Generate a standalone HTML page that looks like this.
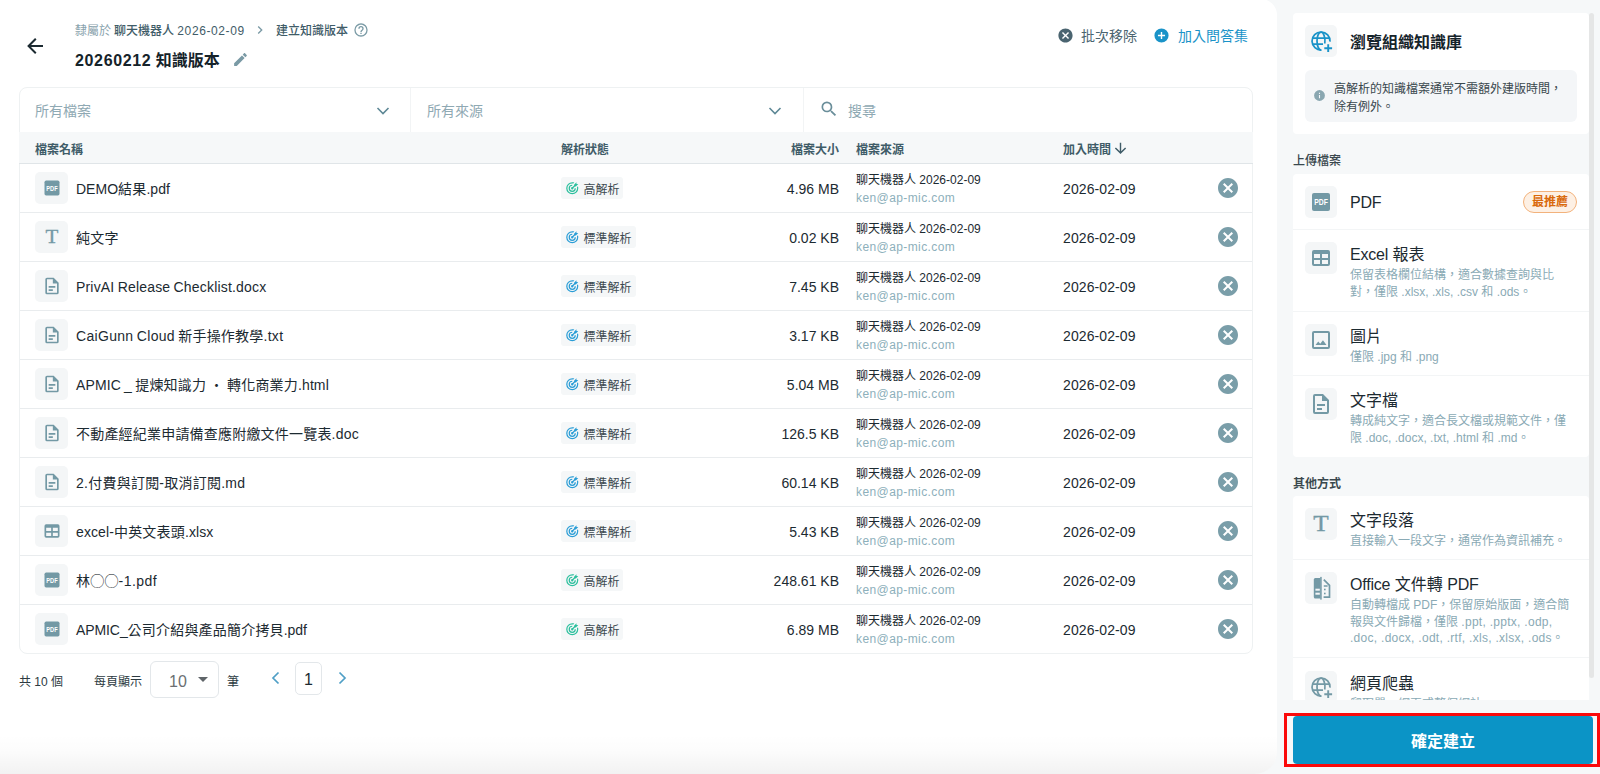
<!DOCTYPE html>
<html lang="zh-Hant"><head><meta charset="utf-8"><title>建立知識版本</title>
<style>
*{box-sizing:border-box;margin:0;padding:0}
html,body{width:1600px;height:774px;overflow:hidden}
body{background:#f6f8f9;font-family:"Liberation Sans","Noto Sans CJK TC",sans-serif;color:#1c2a31;font-size:14px;position:relative}
.l{font-size:1em}
.t,.h,.fn,.sz,.src,.dt,.tt,.ds,.lab{margin-top:1px}
.bc .l{letter-spacing:.6px}
.ttl .l{letter-spacing:.65px}
.fn{letter-spacing:.2px;word-spacing:-.8px}
.em .l{letter-spacing:.4px}
.tt .l{letter-spacing:-.2px}
.of .l{letter-spacing:.28px}
.dt .l{letter-spacing:.1px}
.ic{display:block}
.abs{position:absolute}
#main{position:absolute;left:0;top:-1px;width:1277px;height:775px;background:#fff;border-top-right-radius:16px;border-bottom-right-radius:22px;overflow:hidden}
#main:after{content:'';position:absolute;left:0;bottom:0;width:100%;height:40px;background:linear-gradient(to bottom,rgba(0,0,0,0),rgba(0,0,0,.012) 40%,rgba(0,0,0,.05))}
.t{position:absolute;white-space:nowrap;line-height:20px}
#card{position:absolute;left:19px;top:87px;width:1234px;height:567px;border:1px solid #eef1f2;border-radius:8px;overflow:hidden;background:#fff}
#hdr{position:absolute;left:19px;top:132px;width:1234px;height:32px;background:#f6f8f9;border-bottom:1px solid #e0e5e8}
.h{position:absolute;top:7px;font-size:12px;font-weight:700;color:#3f5c68;line-height:20px;white-space:nowrap}
.row{position:absolute;left:20px;width:1232px;height:49px;border-bottom:1px solid #e9ecee}
.fi{position:absolute;left:15px;top:8px;width:33px;height:32px;border-radius:5px;background:#f4f6f7;display:flex;align-items:center;justify-content:center}
.fn{position:absolute;left:56px;top:14px;line-height:20px;white-space:nowrap;font-size:14px}
.bdg{position:absolute;left:541px;top:13px;height:22px;border-radius:3px;background:#f5f7f8;display:flex;align-items:center;padding-left:3.8px;font-size:12px;color:#3d4a50;white-space:nowrap}
.bdg span{margin-left:4.3px;line-height:22px;position:relative;top:2px}
.sz{position:absolute;right:413px;top:14px;line-height:20px;white-space:nowrap}
.src{position:absolute;left:836px;top:6px;font-size:12px;line-height:18px;white-space:nowrap}
.src .em{color:#8db0bb}
.dt{position:absolute;left:1043px;top:14px;line-height:20px;white-space:nowrap}
.rm{position:absolute;left:1196px;top:12px}
.rc{position:absolute;left:1293px;width:296px;background:#fff;border-radius:4px;overflow:hidden}
.it{position:absolute;left:0;width:296px;border-bottom:1px solid #f3f5f6}
.ib{position:absolute;left:12px;top:12px;width:32px;height:32px;border-radius:5px;background:#f4f6f7;display:flex;align-items:center;justify-content:center}
.tt{position:absolute;left:57px;top:12px;font-size:16px;line-height:24px;white-space:nowrap;color:#1c2a31}
.ds{position:absolute;left:57px;top:36px;width:227px;font-size:12px;line-height:16.6px;color:#8aaab5}
.lab{position:absolute;left:1293px;font-size:12px;line-height:18px;font-weight:500;color:#3a484e;white-space:nowrap}
.rec{position:absolute;left:230px;top:17px;width:54px;height:22px;border:1px solid #f2b27c;background:#fdf0e4;border-radius:11px;color:#d9690b;font-size:12px;font-weight:700;line-height:20px;text-align:center}
</style></head>
<body>
<div id="main"></div>
<div class="abs" style="left:23px;top:34px"><svg class="ic" width="24" height="24" viewBox="0 0 24 24" style=""><path fill="#1c2a31" d="M20,11V13H8L13.5,18.5L12.08,19.92L4.16,12L12.08,4.08L13.5,5.5L8,11H20Z"/></svg></div>
<div class="t" style="left:75px;top:20px;font-size:12px;color:#8aa3ad">隸屬於</div>
<div class="t bc" style="left:114px;top:20px;font-size:12px;font-weight:500;color:#3f5c68">聊天機器人 <span class="l">2026-02-09</span></div>
<div class="abs" style="left:252px;top:22px"><svg class="ic" width="16" height="16" viewBox="0 0 24 24" style=""><path fill="#7a9aa5" d="M8.59,16.58L13.17,12L8.59,7.41L10,6L16,12L10,18L8.59,16.58Z"/></svg></div>
<div class="t" style="left:276px;top:20px;font-size:12px;font-weight:500;color:#3f5c68">建立知識版本</div>
<div class="abs" style="left:353px;top:21.6px"><svg class="ic" width="16" height="16" viewBox="0 0 24 24" style=""><path fill="#7a9aa5" d="M11,18H13V16H11V18M12,2A10,10 0 0,0 2,12A10,10 0 0,0 12,22A10,10 0 0,0 22,12A10,10 0 0,0 12,2M12,20C7.59,20 4,16.41 4,12C4,7.59 7.59,4 12,4C16.41,4 20,7.59 20,12C20,16.41 16.41,20 12,20M12,6A4,4 0 0,0 8,10H10A2,2 0 0,1 12,8A2,2 0 0,1 14,10C14,12 11,11.75 11,15H13C13,12.75 16,12.5 16,10A4,4 0 0,0 12,6Z"/></svg></div>
<div class="t ttl" style="left:75px;top:48px;font-size:16px;line-height:24px;font-weight:700;color:#15232a"><span class="l">20260212</span> 知識版本</div>
<div class="abs" style="left:231.5px;top:50.5px"><svg class="ic" width="17" height="17" viewBox="0 0 24 24" style=""><path fill="#7a9aa5" d="M20.71,7.04C21.1,6.65 21.1,6 20.71,5.63L18.37,3.29C18,2.9 17.35,2.9 16.96,3.29L15.12,5.12L18.87,8.87M3,17.25V21H6.75L17.81,9.93L14.06,6.18L3,17.25Z"/></svg></div>
<div class="abs" style="left:1057px;top:27px"><svg class="ic" width="17" height="17" viewBox="0 0 24 24" style=""><path fill="#4a6470" d="M12,2C17.53,2 22,6.47 22,12C22,17.53 17.53,22 12,22C6.47,22 2,17.53 2,12C2,6.47 6.47,2 12,2M15.59,7L12,10.59L8.41,7L7,8.41L10.59,12L7,15.59L8.41,17L12,13.41L15.59,17L17,15.59L13.41,12L17,8.41L15.59,7Z"/></svg></div>
<div class="t" style="left:1081px;top:25px;color:#4a6470">批次移除</div>
<div class="abs" style="left:1153px;top:27px"><svg class="ic" width="17" height="17" viewBox="0 0 24 24" style=""><path fill="#1a93c8" d="M17,13H13V17H11V13H7V11H11V7H13V11H17M12,2A10,10 0 0,0 2,12A10,10 0 0,0 12,22A10,10 0 0,0 22,12A10,10 0 0,0 12,2Z"/></svg></div>
<div class="t" style="left:1178px;top:25px;color:#1a93c8">加入問答集</div>
<div id="card"></div>
<div class="abs" style="left:410px;top:88px;width:1px;height:44px;background:#f2f4f5"></div>
<div class="abs" style="left:802.5px;top:88px;width:1px;height:44px;background:#f2f4f5"></div>
<div class="t" style="left:35px;top:100px;color:#8fa9b3">所有檔案</div>
<div class="abs" style="left:376px;top:106px"><svg class="ic" width="14" height="10" viewBox="0 0 14 10"><path d="M1.5,2L7,7.5L12.5,2" fill="none" stroke="#5e8896" stroke-width="1.6"/></svg></div>
<div class="t" style="left:427px;top:100px;color:#8fa9b3">所有來源</div>
<div class="abs" style="left:768px;top:106px"><svg class="ic" width="14" height="10" viewBox="0 0 14 10"><path d="M1.5,2L7,7.5L12.5,2" fill="none" stroke="#5e8896" stroke-width="1.6"/></svg></div>
<div class="abs" style="left:819px;top:99px"><svg class="ic" width="20" height="20" viewBox="0 0 24 24" style=""><path fill="#6a8e9a" d="M9.5,3A6.5,6.5 0 0,1 16,9.5C16,11.11 15.41,12.59 14.44,13.73L14.71,14H15.5L20.5,19L19,20.5L14,15.5V14.71L13.73,14.44C12.59,15.41 11.11,16 9.5,16A6.5,6.5 0 0,1 3,9.5A6.5,6.5 0 0,1 9.5,3M9.5,5C7,5 5,7 5,9.5C5,12 7,14 9.5,14C12,14 14,12 14,9.5C14,7 12,5 9.5,5Z"/></svg></div>
<div class="t" style="left:848px;top:100px;color:#8fa9b3">搜尋</div>
<div id="hdr"><div class="h" style="left:16px">檔案名稱</div><div class="h" style="left:542px">解析狀態</div><div class="h" style="right:414px">檔案大小</div><div class="h" style="left:837px">檔案來源</div><div class="h" style="left:1044px">加入時間</div><div class="abs" style="left:1093px;top:7.5px"><svg class="ic" width="17" height="17" viewBox="0 0 24 24" style=""><path fill="#3f5c68" d="M11,4H13V16L18.5,10.5L19.92,11.92L12,19.84L4.08,11.92L5.5,10.5L11,16V4Z"/></svg></div></div>
<div class="row" style="top:164px">
<div class="fi"><svg class="ic" width="20" height="20" viewBox="0 0 24 24"><rect x="3" y="3" width="18" height="18" rx="2" fill="#7399a5"/><text x="12" y="15.4" text-anchor="middle" font-family="Liberation Sans, sans-serif" font-weight="700" font-size="9.4" textLength="13.6" lengthAdjust="spacingAndGlyphs" fill="#fff">PDF</text></svg></div><div class="fn"><span class="l" style="letter-spacing:0.01px">DEMO</span>結果<span class="l" style="letter-spacing:0.01px">.pdf</span></div><div class="bdg" style="width:62px"><svg class="ic" width="14.5" height="14.5" viewBox="0 0 24 24" style=""><path fill="#2bbf9d" d="M12,2A10,10 0 0,0 2,12A10,10 0 0,0 12,22A10,10 0 0,0 22,12C22,10.84 21.79,9.69 21.39,8.61L19.79,10.21C19.93,10.8 20,11.4 20,12A8,8 0 0,1 12,20A8,8 0 0,1 4,12A8,8 0 0,1 12,4C12.6,4 13.2,4.07 13.79,4.21L15.4,2.6C14.31,2.21 13.16,2 12,2M19,2L15,6V7.5L12.45,10.05C12.3,10 12.15,10 12,10A2,2 0 0,0 10,12A2,2 0 0,0 12,14A2,2 0 0,0 14,12C14,11.85 14,11.7 13.95,11.55L16.5,9H18L22,5H19V2M12,6A6,6 0 0,0 6,12A6,6 0 0,0 12,18A6,6 0 0,0 18,12H16A4,4 0 0,1 12,16A4,4 0 0,1 8,12A4,4 0 0,1 12,8V6Z"/></svg><span>高解析</span></div>
<div class="sz"><span class="l">4.96 MB</span></div>
<div class="src"><div>聊天機器人 <span class="l">2026-02-09</span></div><div class="em"><span class="l">ken@ap-mic.com</span></div></div>
<div class="dt"><span class="l">2026-02-09</span></div><div class="rm"><svg class="ic" width="24" height="24" viewBox="0 0 24 24" style=""><path fill="#7a9ea9" d="M12,2C17.53,2 22,6.47 22,12C22,17.53 17.53,22 12,22C6.47,22 2,17.53 2,12C2,6.47 6.47,2 12,2M15.59,7L12,10.59L8.41,7L7,8.41L10.59,12L7,15.59L8.41,17L12,13.41L15.59,17L17,15.59L13.41,12L17,8.41L15.59,7Z"/></svg></div></div>
<div class="row" style="top:213px">
<div class="fi"><svg class="ic" width="20" height="20" viewBox="0 0 24 24"><text x="12" y="19.3" text-anchor="middle" font-family="Liberation Serif, serif" font-size="23.3" textLength="15.4" lengthAdjust="spacingAndGlyphs" stroke="#7399a5" stroke-width=".35" fill="#7399a5">T</text></svg></div><div class="fn">純文字</div><div class="bdg" style="width:75px"><svg class="ic" width="14.5" height="14.5" viewBox="0 0 24 24" style=""><path fill="#2a9dd6" d="M12,2A10,10 0 0,0 2,12A10,10 0 0,0 12,22A10,10 0 0,0 22,12C22,10.84 21.79,9.69 21.39,8.61L19.79,10.21C19.93,10.8 20,11.4 20,12A8,8 0 0,1 12,20A8,8 0 0,1 4,12A8,8 0 0,1 12,4C12.6,4 13.2,4.07 13.79,4.21L15.4,2.6C14.31,2.21 13.16,2 12,2M19,2L15,6V7.5L12.45,10.05C12.3,10 12.15,10 12,10A2,2 0 0,0 10,12A2,2 0 0,0 12,14A2,2 0 0,0 14,12C14,11.85 14,11.7 13.95,11.55L16.5,9H18L22,5H19V2M12,6A6,6 0 0,0 6,12A6,6 0 0,0 12,18A6,6 0 0,0 18,12H16A4,4 0 0,1 12,16A4,4 0 0,1 8,12A4,4 0 0,1 12,8V6Z"/></svg><span>標準解析</span></div>
<div class="sz"><span class="l">0.02 KB</span></div>
<div class="src"><div>聊天機器人 <span class="l">2026-02-09</span></div><div class="em"><span class="l">ken@ap-mic.com</span></div></div>
<div class="dt"><span class="l">2026-02-09</span></div><div class="rm"><svg class="ic" width="24" height="24" viewBox="0 0 24 24" style=""><path fill="#7a9ea9" d="M12,2C17.53,2 22,6.47 22,12C22,17.53 17.53,22 12,22C6.47,22 2,17.53 2,12C2,6.47 6.47,2 12,2M15.59,7L12,10.59L8.41,7L7,8.41L10.59,12L7,15.59L8.41,17L12,13.41L15.59,17L17,15.59L13.41,12L17,8.41L15.59,7Z"/></svg></div></div>
<div class="row" style="top:262px">
<div class="fi"><svg class="ic" width="20" height="20" viewBox="0 0 24 24" style=""><path fill="#7399a5" d="M6,2A2,2 0 0,0 4,4V20A2,2 0 0,0 6,22H18A2,2 0 0,0 20,20V8L14,2H6M6,4H13V9H18V20H6V4M8,12V14H16V12H8M8,16V18H13V16H8Z"/></svg></div><div class="fn"><span class="l" style="letter-spacing:0.18px">PrivAI Release Checklist.docx</span></div><div class="bdg" style="width:75px"><svg class="ic" width="14.5" height="14.5" viewBox="0 0 24 24" style=""><path fill="#2a9dd6" d="M12,2A10,10 0 0,0 2,12A10,10 0 0,0 12,22A10,10 0 0,0 22,12C22,10.84 21.79,9.69 21.39,8.61L19.79,10.21C19.93,10.8 20,11.4 20,12A8,8 0 0,1 12,20A8,8 0 0,1 4,12A8,8 0 0,1 12,4C12.6,4 13.2,4.07 13.79,4.21L15.4,2.6C14.31,2.21 13.16,2 12,2M19,2L15,6V7.5L12.45,10.05C12.3,10 12.15,10 12,10A2,2 0 0,0 10,12A2,2 0 0,0 12,14A2,2 0 0,0 14,12C14,11.85 14,11.7 13.95,11.55L16.5,9H18L22,5H19V2M12,6A6,6 0 0,0 6,12A6,6 0 0,0 12,18A6,6 0 0,0 18,12H16A4,4 0 0,1 12,16A4,4 0 0,1 8,12A4,4 0 0,1 12,8V6Z"/></svg><span>標準解析</span></div>
<div class="sz"><span class="l">7.45 KB</span></div>
<div class="src"><div>聊天機器人 <span class="l">2026-02-09</span></div><div class="em"><span class="l">ken@ap-mic.com</span></div></div>
<div class="dt"><span class="l">2026-02-09</span></div><div class="rm"><svg class="ic" width="24" height="24" viewBox="0 0 24 24" style=""><path fill="#7a9ea9" d="M12,2C17.53,2 22,6.47 22,12C22,17.53 17.53,22 12,22C6.47,22 2,17.53 2,12C2,6.47 6.47,2 12,2M15.59,7L12,10.59L8.41,7L7,8.41L10.59,12L7,15.59L8.41,17L12,13.41L15.59,17L17,15.59L13.41,12L17,8.41L15.59,7Z"/></svg></div></div>
<div class="row" style="top:311px">
<div class="fi"><svg class="ic" width="20" height="20" viewBox="0 0 24 24" style=""><path fill="#7399a5" d="M6,2A2,2 0 0,0 4,4V20A2,2 0 0,0 6,22H18A2,2 0 0,0 20,20V8L14,2H6M6,4H13V9H18V20H6V4M8,12V14H16V12H8M8,16V18H13V16H8Z"/></svg></div><div class="fn"><span class="l" style="letter-spacing:0.31px">CaiGunn Cloud</span> 新手操作教學<span class="l" style="letter-spacing:0.31px">.txt</span></div><div class="bdg" style="width:75px"><svg class="ic" width="14.5" height="14.5" viewBox="0 0 24 24" style=""><path fill="#2a9dd6" d="M12,2A10,10 0 0,0 2,12A10,10 0 0,0 12,22A10,10 0 0,0 22,12C22,10.84 21.79,9.69 21.39,8.61L19.79,10.21C19.93,10.8 20,11.4 20,12A8,8 0 0,1 12,20A8,8 0 0,1 4,12A8,8 0 0,1 12,4C12.6,4 13.2,4.07 13.79,4.21L15.4,2.6C14.31,2.21 13.16,2 12,2M19,2L15,6V7.5L12.45,10.05C12.3,10 12.15,10 12,10A2,2 0 0,0 10,12A2,2 0 0,0 12,14A2,2 0 0,0 14,12C14,11.85 14,11.7 13.95,11.55L16.5,9H18L22,5H19V2M12,6A6,6 0 0,0 6,12A6,6 0 0,0 12,18A6,6 0 0,0 18,12H16A4,4 0 0,1 12,16A4,4 0 0,1 8,12A4,4 0 0,1 12,8V6Z"/></svg><span>標準解析</span></div>
<div class="sz"><span class="l">3.17 KB</span></div>
<div class="src"><div>聊天機器人 <span class="l">2026-02-09</span></div><div class="em"><span class="l">ken@ap-mic.com</span></div></div>
<div class="dt"><span class="l">2026-02-09</span></div><div class="rm"><svg class="ic" width="24" height="24" viewBox="0 0 24 24" style=""><path fill="#7a9ea9" d="M12,2C17.53,2 22,6.47 22,12C22,17.53 17.53,22 12,22C6.47,22 2,17.53 2,12C2,6.47 6.47,2 12,2M15.59,7L12,10.59L8.41,7L7,8.41L10.59,12L7,15.59L8.41,17L12,13.41L15.59,17L17,15.59L13.41,12L17,8.41L15.59,7Z"/></svg></div></div>
<div class="row" style="top:360px">
<div class="fi"><svg class="ic" width="20" height="20" viewBox="0 0 24 24" style=""><path fill="#7399a5" d="M6,2A2,2 0 0,0 4,4V20A2,2 0 0,0 6,22H18A2,2 0 0,0 20,20V8L14,2H6M6,4H13V9H18V20H6V4M8,12V14H16V12H8M8,16V18H13V16H8Z"/></svg></div><div class="fn"><span class="l" style="letter-spacing:0.10px">APMIC _</span> 提煉知識力 ・ 轉化商業力<span class="l" style="letter-spacing:0.10px">.html</span></div><div class="bdg" style="width:75px"><svg class="ic" width="14.5" height="14.5" viewBox="0 0 24 24" style=""><path fill="#2a9dd6" d="M12,2A10,10 0 0,0 2,12A10,10 0 0,0 12,22A10,10 0 0,0 22,12C22,10.84 21.79,9.69 21.39,8.61L19.79,10.21C19.93,10.8 20,11.4 20,12A8,8 0 0,1 12,20A8,8 0 0,1 4,12A8,8 0 0,1 12,4C12.6,4 13.2,4.07 13.79,4.21L15.4,2.6C14.31,2.21 13.16,2 12,2M19,2L15,6V7.5L12.45,10.05C12.3,10 12.15,10 12,10A2,2 0 0,0 10,12A2,2 0 0,0 12,14A2,2 0 0,0 14,12C14,11.85 14,11.7 13.95,11.55L16.5,9H18L22,5H19V2M12,6A6,6 0 0,0 6,12A6,6 0 0,0 12,18A6,6 0 0,0 18,12H16A4,4 0 0,1 12,16A4,4 0 0,1 8,12A4,4 0 0,1 12,8V6Z"/></svg><span>標準解析</span></div>
<div class="sz"><span class="l">5.04 MB</span></div>
<div class="src"><div>聊天機器人 <span class="l">2026-02-09</span></div><div class="em"><span class="l">ken@ap-mic.com</span></div></div>
<div class="dt"><span class="l">2026-02-09</span></div><div class="rm"><svg class="ic" width="24" height="24" viewBox="0 0 24 24" style=""><path fill="#7a9ea9" d="M12,2C17.53,2 22,6.47 22,12C22,17.53 17.53,22 12,22C6.47,22 2,17.53 2,12C2,6.47 6.47,2 12,2M15.59,7L12,10.59L8.41,7L7,8.41L10.59,12L7,15.59L8.41,17L12,13.41L15.59,17L17,15.59L13.41,12L17,8.41L15.59,7Z"/></svg></div></div>
<div class="row" style="top:409px">
<div class="fi"><svg class="ic" width="20" height="20" viewBox="0 0 24 24" style=""><path fill="#7399a5" d="M6,2A2,2 0 0,0 4,4V20A2,2 0 0,0 6,22H18A2,2 0 0,0 20,20V8L14,2H6M6,4H13V9H18V20H6V4M8,12V14H16V12H8M8,16V18H13V16H8Z"/></svg></div><div class="fn">不動產經紀業申請備查應附繳文件一覽表<span class="l" style="letter-spacing:0.23px">.doc</span></div><div class="bdg" style="width:75px"><svg class="ic" width="14.5" height="14.5" viewBox="0 0 24 24" style=""><path fill="#2a9dd6" d="M12,2A10,10 0 0,0 2,12A10,10 0 0,0 12,22A10,10 0 0,0 22,12C22,10.84 21.79,9.69 21.39,8.61L19.79,10.21C19.93,10.8 20,11.4 20,12A8,8 0 0,1 12,20A8,8 0 0,1 4,12A8,8 0 0,1 12,4C12.6,4 13.2,4.07 13.79,4.21L15.4,2.6C14.31,2.21 13.16,2 12,2M19,2L15,6V7.5L12.45,10.05C12.3,10 12.15,10 12,10A2,2 0 0,0 10,12A2,2 0 0,0 12,14A2,2 0 0,0 14,12C14,11.85 14,11.7 13.95,11.55L16.5,9H18L22,5H19V2M12,6A6,6 0 0,0 6,12A6,6 0 0,0 12,18A6,6 0 0,0 18,12H16A4,4 0 0,1 12,16A4,4 0 0,1 8,12A4,4 0 0,1 12,8V6Z"/></svg><span>標準解析</span></div>
<div class="sz"><span class="l">126.5 KB</span></div>
<div class="src"><div>聊天機器人 <span class="l">2026-02-09</span></div><div class="em"><span class="l">ken@ap-mic.com</span></div></div>
<div class="dt"><span class="l">2026-02-09</span></div><div class="rm"><svg class="ic" width="24" height="24" viewBox="0 0 24 24" style=""><path fill="#7a9ea9" d="M12,2C17.53,2 22,6.47 22,12C22,17.53 17.53,22 12,22C6.47,22 2,17.53 2,12C2,6.47 6.47,2 12,2M15.59,7L12,10.59L8.41,7L7,8.41L10.59,12L7,15.59L8.41,17L12,13.41L15.59,17L17,15.59L13.41,12L17,8.41L15.59,7Z"/></svg></div></div>
<div class="row" style="top:458px">
<div class="fi"><svg class="ic" width="20" height="20" viewBox="0 0 24 24" style=""><path fill="#7399a5" d="M6,2A2,2 0 0,0 4,4V20A2,2 0 0,0 6,22H18A2,2 0 0,0 20,20V8L14,2H6M6,4H13V9H18V20H6V4M8,12V14H16V12H8M8,16V18H13V16H8Z"/></svg></div><div class="fn"><span class="l" style="letter-spacing:0.32px">2.</span>付費與訂閱<span class="l" style="letter-spacing:0.32px">-</span>取消訂閱<span class="l" style="letter-spacing:0.32px">.md</span></div><div class="bdg" style="width:75px"><svg class="ic" width="14.5" height="14.5" viewBox="0 0 24 24" style=""><path fill="#2a9dd6" d="M12,2A10,10 0 0,0 2,12A10,10 0 0,0 12,22A10,10 0 0,0 22,12C22,10.84 21.79,9.69 21.39,8.61L19.79,10.21C19.93,10.8 20,11.4 20,12A8,8 0 0,1 12,20A8,8 0 0,1 4,12A8,8 0 0,1 12,4C12.6,4 13.2,4.07 13.79,4.21L15.4,2.6C14.31,2.21 13.16,2 12,2M19,2L15,6V7.5L12.45,10.05C12.3,10 12.15,10 12,10A2,2 0 0,0 10,12A2,2 0 0,0 12,14A2,2 0 0,0 14,12C14,11.85 14,11.7 13.95,11.55L16.5,9H18L22,5H19V2M12,6A6,6 0 0,0 6,12A6,6 0 0,0 12,18A6,6 0 0,0 18,12H16A4,4 0 0,1 12,16A4,4 0 0,1 8,12A4,4 0 0,1 12,8V6Z"/></svg><span>標準解析</span></div>
<div class="sz"><span class="l">60.14 KB</span></div>
<div class="src"><div>聊天機器人 <span class="l">2026-02-09</span></div><div class="em"><span class="l">ken@ap-mic.com</span></div></div>
<div class="dt"><span class="l">2026-02-09</span></div><div class="rm"><svg class="ic" width="24" height="24" viewBox="0 0 24 24" style=""><path fill="#7a9ea9" d="M12,2C17.53,2 22,6.47 22,12C22,17.53 17.53,22 12,22C6.47,22 2,17.53 2,12C2,6.47 6.47,2 12,2M15.59,7L12,10.59L8.41,7L7,8.41L10.59,12L7,15.59L8.41,17L12,13.41L15.59,17L17,15.59L13.41,12L17,8.41L15.59,7Z"/></svg></div></div>
<div class="row" style="top:507px">
<div class="fi"><svg class="ic" width="20" height="20" viewBox="0 0 24 24" style=""><path fill="#7399a5" d="M5,4H19A2,2 0 0,1 21,6V18A2,2 0 0,1 19,20H5A2,2 0 0,1 3,18V6A2,2 0 0,1 5,4M5,8V12H11V8H5M13,8V12H19V8H13M5,14V18H11V14H5M13,14V18H19V14H13Z"/></svg></div><div class="fn"><span class="l" style="letter-spacing:0.10px">excel-</span>中英文表頭<span class="l" style="letter-spacing:0.10px">.xlsx</span></div><div class="bdg" style="width:75px"><svg class="ic" width="14.5" height="14.5" viewBox="0 0 24 24" style=""><path fill="#2a9dd6" d="M12,2A10,10 0 0,0 2,12A10,10 0 0,0 12,22A10,10 0 0,0 22,12C22,10.84 21.79,9.69 21.39,8.61L19.79,10.21C19.93,10.8 20,11.4 20,12A8,8 0 0,1 12,20A8,8 0 0,1 4,12A8,8 0 0,1 12,4C12.6,4 13.2,4.07 13.79,4.21L15.4,2.6C14.31,2.21 13.16,2 12,2M19,2L15,6V7.5L12.45,10.05C12.3,10 12.15,10 12,10A2,2 0 0,0 10,12A2,2 0 0,0 12,14A2,2 0 0,0 14,12C14,11.85 14,11.7 13.95,11.55L16.5,9H18L22,5H19V2M12,6A6,6 0 0,0 6,12A6,6 0 0,0 12,18A6,6 0 0,0 18,12H16A4,4 0 0,1 12,16A4,4 0 0,1 8,12A4,4 0 0,1 12,8V6Z"/></svg><span>標準解析</span></div>
<div class="sz"><span class="l">5.43 KB</span></div>
<div class="src"><div>聊天機器人 <span class="l">2026-02-09</span></div><div class="em"><span class="l">ken@ap-mic.com</span></div></div>
<div class="dt"><span class="l">2026-02-09</span></div><div class="rm"><svg class="ic" width="24" height="24" viewBox="0 0 24 24" style=""><path fill="#7a9ea9" d="M12,2C17.53,2 22,6.47 22,12C22,17.53 17.53,22 12,22C6.47,22 2,17.53 2,12C2,6.47 6.47,2 12,2M15.59,7L12,10.59L8.41,7L7,8.41L10.59,12L7,15.59L8.41,17L12,13.41L15.59,17L17,15.59L13.41,12L17,8.41L15.59,7Z"/></svg></div></div>
<div class="row" style="top:556px">
<div class="fi"><svg class="ic" width="20" height="20" viewBox="0 0 24 24"><rect x="3" y="3" width="18" height="18" rx="2" fill="#7399a5"/><text x="12" y="15.4" text-anchor="middle" font-family="Liberation Sans, sans-serif" font-weight="700" font-size="9.4" textLength="13.6" lengthAdjust="spacingAndGlyphs" fill="#fff">PDF</text></svg></div><div class="fn">林◯◯<span class="l" style="letter-spacing:0.45px">-1.pdf</span></div><div class="bdg" style="width:62px"><svg class="ic" width="14.5" height="14.5" viewBox="0 0 24 24" style=""><path fill="#2bbf9d" d="M12,2A10,10 0 0,0 2,12A10,10 0 0,0 12,22A10,10 0 0,0 22,12C22,10.84 21.79,9.69 21.39,8.61L19.79,10.21C19.93,10.8 20,11.4 20,12A8,8 0 0,1 12,20A8,8 0 0,1 4,12A8,8 0 0,1 12,4C12.6,4 13.2,4.07 13.79,4.21L15.4,2.6C14.31,2.21 13.16,2 12,2M19,2L15,6V7.5L12.45,10.05C12.3,10 12.15,10 12,10A2,2 0 0,0 10,12A2,2 0 0,0 12,14A2,2 0 0,0 14,12C14,11.85 14,11.7 13.95,11.55L16.5,9H18L22,5H19V2M12,6A6,6 0 0,0 6,12A6,6 0 0,0 12,18A6,6 0 0,0 18,12H16A4,4 0 0,1 12,16A4,4 0 0,1 8,12A4,4 0 0,1 12,8V6Z"/></svg><span>高解析</span></div>
<div class="sz"><span class="l">248.61 KB</span></div>
<div class="src"><div>聊天機器人 <span class="l">2026-02-09</span></div><div class="em"><span class="l">ken@ap-mic.com</span></div></div>
<div class="dt"><span class="l">2026-02-09</span></div><div class="rm"><svg class="ic" width="24" height="24" viewBox="0 0 24 24" style=""><path fill="#7a9ea9" d="M12,2C17.53,2 22,6.47 22,12C22,17.53 17.53,22 12,22C6.47,22 2,17.53 2,12C2,6.47 6.47,2 12,2M15.59,7L12,10.59L8.41,7L7,8.41L10.59,12L7,15.59L8.41,17L12,13.41L15.59,17L17,15.59L13.41,12L17,8.41L15.59,7Z"/></svg></div></div>
<div class="row" style="top:605px;border-bottom:0">
<div class="fi"><svg class="ic" width="20" height="20" viewBox="0 0 24 24"><rect x="3" y="3" width="18" height="18" rx="2" fill="#7399a5"/><text x="12" y="15.4" text-anchor="middle" font-family="Liberation Sans, sans-serif" font-weight="700" font-size="9.4" textLength="13.6" lengthAdjust="spacingAndGlyphs" fill="#fff">PDF</text></svg></div><div class="fn"><span class="l" style="letter-spacing:-0.09px">APMIC_</span>公司介紹與產品簡介拷貝<span class="l" style="letter-spacing:-0.09px">.pdf</span></div><div class="bdg" style="width:62px"><svg class="ic" width="14.5" height="14.5" viewBox="0 0 24 24" style=""><path fill="#2bbf9d" d="M12,2A10,10 0 0,0 2,12A10,10 0 0,0 12,22A10,10 0 0,0 22,12C22,10.84 21.79,9.69 21.39,8.61L19.79,10.21C19.93,10.8 20,11.4 20,12A8,8 0 0,1 12,20A8,8 0 0,1 4,12A8,8 0 0,1 12,4C12.6,4 13.2,4.07 13.79,4.21L15.4,2.6C14.31,2.21 13.16,2 12,2M19,2L15,6V7.5L12.45,10.05C12.3,10 12.15,10 12,10A2,2 0 0,0 10,12A2,2 0 0,0 12,14A2,2 0 0,0 14,12C14,11.85 14,11.7 13.95,11.55L16.5,9H18L22,5H19V2M12,6A6,6 0 0,0 6,12A6,6 0 0,0 12,18A6,6 0 0,0 18,12H16A4,4 0 0,1 12,16A4,4 0 0,1 8,12A4,4 0 0,1 12,8V6Z"/></svg><span>高解析</span></div>
<div class="sz"><span class="l">6.89 MB</span></div>
<div class="src"><div>聊天機器人 <span class="l">2026-02-09</span></div><div class="em"><span class="l">ken@ap-mic.com</span></div></div>
<div class="dt"><span class="l">2026-02-09</span></div><div class="rm"><svg class="ic" width="24" height="24" viewBox="0 0 24 24" style=""><path fill="#7a9ea9" d="M12,2C17.53,2 22,6.47 22,12C22,17.53 17.53,22 12,22C6.47,22 2,17.53 2,12C2,6.47 6.47,2 12,2M15.59,7L12,10.59L8.41,7L7,8.41L10.59,12L7,15.59L8.41,17L12,13.41L15.59,17L17,15.59L13.41,12L17,8.41L15.59,7Z"/></svg></div></div>
<div class="t" style="left:19px;top:671px;font-size:12px;color:#2c3a41">共 <span class="l">10</span> 個</div>
<div class="t" style="left:94px;top:671px;font-size:12px;color:#2c3a41">每頁顯示</div>
<div class="abs" style="left:150px;top:661px;width:69px;height:37px;border:1px solid #e3e7ea;border-radius:6px"></div>
<div class="t" style="left:169px;top:669px;font-size:16px;line-height:24px;color:#6b6f72"><span class="l">10</span></div>
<div class="abs" style="left:191px;top:667px"><svg class="ic" width="24" height="24" viewBox="0 0 24 24" style=""><path fill="#5f6569" d="M7,10L12,15L17,10H7Z"/></svg></div>
<div class="t" style="left:227px;top:671px;font-size:12px;color:#2c3a41">筆</div>
<div class="abs" style="left:271px;top:671px"><svg class="ic" width="10" height="14" viewBox="0 0 10 14"><path d="M7.5,1.5L2,7L7.5,12.5" fill="none" stroke="#4f9fc6" stroke-width="1.7"/></svg></div>
<div class="abs" style="left:295px;top:662px;width:27px;height:33px;border:1px solid #e3e7ea;border-radius:5px"></div>
<div class="t" style="left:295px;width:27px;text-align:center;top:667px;font-size:16px;line-height:24px;color:#1c2a31"><span class="l">1</span></div>
<div class="abs" style="left:337px;top:671px"><svg class="ic" width="10" height="14" viewBox="0 0 10 14"><path d="M2.5,1.5L8,7L2.5,12.5" fill="none" stroke="#4f9fc6" stroke-width="1.7"/></svg></div>
<div class="rc" style="top:13px;height:121px"><div class="ib"><svg class="ic" width="24" height="24" viewBox="0 0 24 24" fill="none" stroke="#1a93c8" stroke-width="1.75"><path d="M21,12.6A9,9 0 1,0 12.6,21"/><path d="M3.5,9H20.5M3.5,15H14"/><path d="M12,3A4,9 0 0,0 12,21M12,3A4,9 0 0,1 15.8,14.5"/><path stroke-width="1.9" d="M19.2,15.3V23.1M15.3,19.2H23.1"/></svg></div><div class="tt" style="top:17px;font-weight:700;color:#15232a">瀏覽組織知識庫</div><div class="abs" style="left:12px;top:57px;width:272px;height:52px;background:#f4f6f8;border-radius:6px"></div><div class="abs" style="left:20px;top:76px"><svg class="ic" width="13" height="13" viewBox="0 0 24 24" style=""><path fill="#8aa7b1" d="M13,9H11V7H13M13,17H11V11H13M12,2A10,10 0 0,0 2,12A10,10 0 0,0 12,22A10,10 0 0,0 22,12A10,10 0 0,0 12,2Z"/></svg></div><div class="abs" style="left:41px;top:67px;width:232px;font-size:12px;line-height:18px;color:#3a484e">高解析的知識檔案通常不需額外建版時間，除有例外。</div></div>
<div class="lab" style="top:151px">上傳檔案</div>
<div class="rc" style="top:174px;height:282.5px"><div class="it" style="top:0px;height:56px"><div class="ib"><svg class="ic" width="24" height="24" viewBox="0 0 24 24"><rect x="3" y="3" width="18" height="18" rx="2" fill="#7399a5"/><text x="12" y="15.4" text-anchor="middle" font-family="Liberation Sans, sans-serif" font-weight="700" font-size="9.4" textLength="13.6" lengthAdjust="spacingAndGlyphs" fill="#fff">PDF</text></svg></div><div class="tt" style="top:16px"><span class="l">PDF</span></div><div class="rec">最推薦</div></div><div class="it" style="top:56px;height:82px"><div class="ib"><svg class="ic" width="24" height="24" viewBox="0 0 24 24" style=""><path fill="#7399a5" d="M5,4H19A2,2 0 0,1 21,6V18A2,2 0 0,1 19,20H5A2,2 0 0,1 3,18V6A2,2 0 0,1 5,4M5,8V12H11V8H5M13,8V12H19V8H13M5,14V18H11V14H5M13,14V18H19V14H13Z"/></svg></div><div class="tt" style="top:12px"><span class="l">Excel</span> 報表</div><div class="ds">保留表格欄位結構，適合數據查詢與比對，僅限 <span class="l">.xlsx, .xls, .csv</span> 和 <span class="l">.ods</span>。</div></div><div class="it" style="top:138px;height:64px"><div class="ib"><svg class="ic" width="24" height="24" viewBox="0 0 24 24" style=""><path fill="#7399a5" d="M19,19H5V5H19M19,3H5A2,2 0 0,0 3,5V19A2,2 0 0,0 5,21H19A2,2 0 0,0 21,19V5A2,2 0 0,0 19,3M13.96,12.29L11.21,15.83L9.25,13.47L6.5,17H17.5L13.96,12.29Z"/></svg></div><div class="tt" style="top:12px">圖片</div><div class="ds">僅限 <span class="l">.jpg</span> 和 <span class="l">.png</span></div></div><div class="it" style="top:202px;height:82px;border-bottom:0"><div class="ib"><svg class="ic" width="24" height="24" viewBox="0 0 24 24" style=""><path fill="#7399a5" d="M6,2A2,2 0 0,0 4,4V20A2,2 0 0,0 6,22H18A2,2 0 0,0 20,20V8L14,2H6M6,4H13V9H18V20H6V4M8,12V14H16V12H8M8,16V18H13V16H8Z"/></svg></div><div class="tt" style="top:12px">文字檔</div><div class="ds">轉成純文字，適合長文檔或規範文件，僅限 <span class="l">.doc, .docx, .txt, .html</span> 和 <span class="l">.md</span>。</div></div></div>
<div class="lab" style="top:474px;font-weight:700">其他方式</div>
<div class="rc" style="top:496px;height:204px;border-bottom-left-radius:0;border-bottom-right-radius:0"><div class="it" style="top:0px;height:64px"><div class="ib"><svg class="ic" width="24" height="24" viewBox="0 0 24 24"><text x="12" y="19.3" text-anchor="middle" font-family="Liberation Serif, serif" font-size="23.3" textLength="15.4" lengthAdjust="spacingAndGlyphs" stroke="#7399a5" stroke-width=".35" fill="#7399a5">T</text></svg></div><div class="tt" style="top:12px">文字段落</div><div class="ds">直接輸入一段文字，通常作為資訊補充。</div></div><div class="it" style="top:64px;height:98px"><div class="ib"><svg class="ic" width="24" height="24" viewBox="0 0 24 24"><path fill="#7399a5" d="M6.3,2H11.5V22.4H6.3A1.5,1.5 0 0,1 4.8,20.9V3.5A1.5,1.5 0 0,1 6.3,2Z"/><rect x="6.4" y="12.7" width="4.4" height="2" fill="#f4f6f7"/><rect x="6.4" y="16.7" width="4.4" height="2" fill="#f4f6f7"/><rect x="11.2" y="0.9" width="1.5" height="22.7" fill="#7399a5"/><path fill="none" stroke="#7399a5" stroke-width="1.7" d="M14.8,3.6L20.5,9.3V21.2H14.6M14.8,10H18.6"/><rect x="15" y="12.7" width="1.6" height="1.6" fill="#7399a5"/><rect x="15" y="16.7" width="1.6" height="1.6" fill="#7399a5"/></svg></div><div class="tt" style="top:12px"><span class="l">Office</span> 文件轉 <span class="l">PDF</span></div><div class="ds">自動轉檔成 <span class="l">PDF</span>，保留原始版面，適合簡<span class="of">報與文件歸檔，僅限 <span class="l">.ppt, .pptx, .odp,</span><br><span class="l">.doc, .docx, .odt, .rtf, .xls, .xlsx, .ods</span>。</span></div></div><div class="it" style="top:162.5px;height:82px;border-bottom:0"><div class="ib"><svg class="ic" width="24" height="24" viewBox="0 0 24 24" fill="none" stroke="#7399a5" stroke-width="1.75"><path d="M21,12.6A9,9 0 1,0 12.6,21"/><path d="M3.5,9H20.5M3.5,15H14"/><path d="M12,3A4,9 0 0,0 12,21M12,3A4,9 0 0,1 15.8,14.5"/><path stroke-width="1.9" d="M19.2,15.3V23.1M15.3,19.2H23.1"/></svg></div><div class="tt" style="top:12px">網頁爬蟲</div><div class="ds">爬取單一網頁或整個網站。</div></div></div>
<div class="abs" style="left:1589px;top:13px;width:5px;height:664.5px;background:#e5e6e6;border-radius:2.5px"></div>
<div class="abs" style="left:1277px;top:700px;width:323px;height:74px;background:#f6f8f9"></div>
<div class="abs" style="left:1293px;top:716px;width:300px;height:48px;background:#0b94c6;border-radius:4px;color:#fff;font-size:16px;font-weight:700;line-height:51px;text-align:center">確定建立</div>
<div class="abs" style="left:1284px;top:713px;width:315.5px;height:54px;border:3px solid #fb0a0a"></div>
</body></html>
